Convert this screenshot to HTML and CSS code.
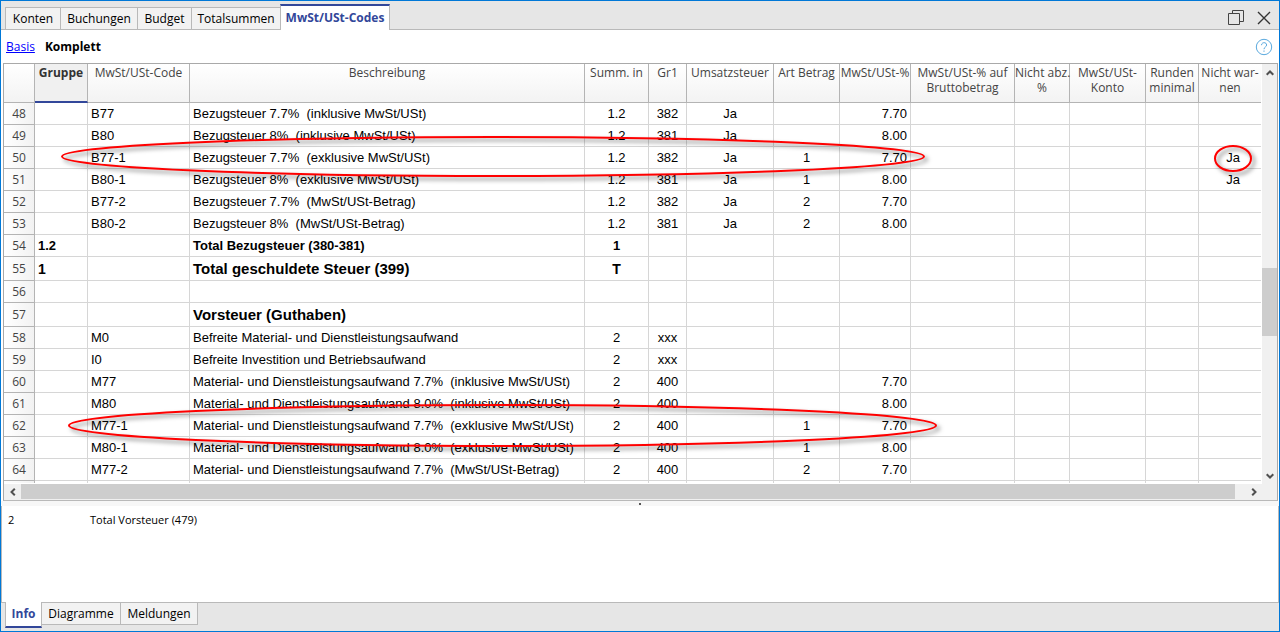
FILE: index.html
```html
<!DOCTYPE html>
<html lang="de">
<head>
<meta charset="utf-8">
<title>MwSt/USt-Codes</title>
<link rel="stylesheet" href="styles.css">
</head>
<body>
<div class="window">
  <header class="topbar">
    <nav class="tabs">
      <button class="tab tab-s">Konten</button>
      <button class="tab tab-m">Buchungen</button>
      <button class="tab tab-xs">Budget</button>
      <button class="tab tab-l">Totalsummen</button>
      <button class="tab tab-active">MwSt/USt-Codes</button>
    </nav>
    <div class="controls">
      <button class="icon" aria-label="Fenster"><svg width="16" height="16" viewBox="0 0 16 16" fill="none" stroke="#444"><path d="M.5 3.500h11v11H.5zM4.500 3.500v-3h11v11h-4"/></svg></button>
      <button class="icon" aria-label="Schliessen"><svg width="16" height="16" viewBox="0 0 16 16" fill="none" stroke="#333" stroke-width="1.400"><path d="M2 2l12 12M14 2L2 14"/></svg></button>
    </div>
  </header>
  <div class="views">
    <a href="#">Basis</a>
    <strong>Komplett</strong>
    <button class="icon help" aria-label="Hilfe"><svg width="18" height="18" viewBox="0 0 18 18" fill="none" stroke="#5aa9de"><circle cx="9" cy="9" r="7.700"/><path d="M6.500 7.200C6.500 3.800 11.700 3.900 11.600 7c0 2-2.600 2-2.600 4.200M9 12.500v1.300"/></svg></button>
  </div>
  <main class="sheet">
    <div class="grid">
      <table>
        <colgroup>
          <col class="c-row"><col class="c-gruppe"><col class="c-code"><col><col class="c-summ"><col class="c-gr"><col class="c-ums"><col class="c-art"><col class="c-pct"><col class="c-brutto"><col class="c-abz"><col class="c-konto"><col class="c-runden"><col class="c-warn">
        </colgroup>
        <thead>
          <tr><th></th><th class="selected">Gruppe</th><th>MwSt/USt-Code</th><th>Beschreibung</th><th>Summ. in</th><th>Gr1</th><th>Umsatzsteuer</th><th>Art Betrag</th><th>MwSt/USt-%</th><th>MwSt/USt-% auf<br>Bruttobetrag</th><th>Nicht abz.<br>%</th><th>MwSt/USt-<br>Konto</th><th>Runden<br>minimal</th><th>Nicht war-<br>nen</th></tr>
        </thead>
        <tbody>
          <tr><th>48</th><td></td><td>B77</td><td>Bezugsteuer 7.7%  (inklusive MwSt/USt)</td><td>1.2</td><td>382</td><td>Ja</td><td></td><td>7.70</td><td></td><td></td><td></td><td></td><td></td></tr>
          <tr><th>49</th><td></td><td>B80</td><td>Bezugsteuer 8%  (inklusive MwSt/USt)</td><td>1.2</td><td>381</td><td>Ja</td><td></td><td>8.00</td><td></td><td></td><td></td><td></td><td></td></tr>
          <tr><th>50</th><td></td><td>B77-1</td><td>Bezugsteuer 7.7%  (exklusive MwSt/USt)</td><td>1.2</td><td>382</td><td>Ja</td><td>1</td><td>7.70</td><td></td><td></td><td></td><td></td><td>Ja</td></tr>
          <tr><th>51</th><td></td><td>B80-1</td><td>Bezugsteuer 8%  (exklusive MwSt/USt)</td><td>1.2</td><td>381</td><td>Ja</td><td>1</td><td>8.00</td><td></td><td></td><td></td><td></td><td>Ja</td></tr>
          <tr><th>52</th><td></td><td>B77-2</td><td>Bezugsteuer 7.7%  (MwSt/USt-Betrag)</td><td>1.2</td><td>382</td><td>Ja</td><td>2</td><td>7.70</td><td></td><td></td><td></td><td></td><td></td></tr>
          <tr><th>53</th><td></td><td>B80-2</td><td>Bezugsteuer 8%  (MwSt/USt-Betrag)</td><td>1.2</td><td>381</td><td>Ja</td><td>2</td><td>8.00</td><td></td><td></td><td></td><td></td><td></td></tr>
          <tr class="total"><th>54</th><td>1.2</td><td></td><td>Total Bezugsteuer (380-381)</td><td>1</td><td></td><td></td><td></td><td></td><td></td><td></td><td></td><td></td><td></td></tr>
          <tr class="title"><th>55</th><td>1</td><td></td><td>Total geschuldete Steuer (399)</td><td>T</td><td></td><td></td><td></td><td></td><td></td><td></td><td></td><td></td><td></td></tr>
          <tr><th>56</th><td></td><td></td><td></td><td></td><td></td><td></td><td></td><td></td><td></td><td></td><td></td><td></td><td></td></tr>
          <tr class="title"><th>57</th><td></td><td></td><td>Vorsteuer (Guthaben)</td><td></td><td></td><td></td><td></td><td></td><td></td><td></td><td></td><td></td><td></td></tr>
          <tr><th>58</th><td></td><td>M0</td><td>Befreite Material- und Dienstleistungsaufwand</td><td>2</td><td>xxx</td><td></td><td></td><td></td><td></td><td></td><td></td><td></td><td></td></tr>
          <tr><th>59</th><td></td><td>I0</td><td>Befreite Investition und Betriebsaufwand</td><td>2</td><td>xxx</td><td></td><td></td><td></td><td></td><td></td><td></td><td></td><td></td></tr>
          <tr><th>60</th><td></td><td>M77</td><td>Material- und Dienstleistungsaufwand 7.7%  (inklusive MwSt/USt)</td><td>2</td><td>400</td><td></td><td></td><td>7.70</td><td></td><td></td><td></td><td></td><td></td></tr>
          <tr><th>61</th><td></td><td>M80</td><td>Material- und Dienstleistungsaufwand 8.0%  (inklusive MwSt/USt)</td><td>2</td><td>400</td><td></td><td></td><td>8.00</td><td></td><td></td><td></td><td></td><td></td></tr>
          <tr><th>62</th><td></td><td>M77-1</td><td>Material- und Dienstleistungsaufwand 7.7%  (exklusive MwSt/USt)</td><td>2</td><td>400</td><td></td><td>1</td><td>7.70</td><td></td><td></td><td></td><td></td><td></td></tr>
          <tr><th>63</th><td></td><td>M80-1</td><td>Material- und Dienstleistungsaufwand 8.0%  (exklusive MwSt/USt)</td><td>2</td><td>400</td><td></td><td>1</td><td>8.00</td><td></td><td></td><td></td><td></td><td></td></tr>
          <tr><th>64</th><td></td><td>M77-2</td><td>Material- und Dienstleistungsaufwand 7.7%  (MwSt/USt-Betrag)</td><td>2</td><td>400</td><td></td><td>2</td><td>7.70</td><td></td><td></td><td></td><td></td><td></td></tr>
          <tr class="cut"><th></th><td></td><td></td><td></td><td></td><td></td><td></td><td></td><td></td><td></td><td></td><td></td><td></td><td></td></tr>
        </tbody>
      </table>
      <svg class="mark mark-b"><ellipse cx="50%" cy="50%" rx="50%" ry="50%"/></svg>
      <svg class="mark mark-m"><ellipse cx="50%" cy="50%" rx="50%" ry="50%"/></svg>
      <svg class="mark mark-ja"><ellipse cx="50%" cy="50%" rx="50%" ry="50%"/></svg>
    </div>
    <div class="vscroll">
      <button class="arrow" aria-label="Nach oben"><svg width="8" height="6" viewBox="0 0 8 6"><path d="M.7 4.800L4 1.500l3.300 3.300"/></svg></button>
      <div class="track-v"><div class="thumb-v"></div></div>
      <button class="arrow" aria-label="Nach unten"><svg width="8" height="6" viewBox="0 0 8 6"><path d="M.7 1.200L4 4.500l3.300-3.300"/></svg></button>
    </div>
    <div class="hscroll">
      <button class="arrow" aria-label="Nach links"><svg width="6" height="8" viewBox="0 0 6 8"><path d="M4.800.7L1.500 4l3.300 3.300"/></svg></button>
      <div class="track-h"><div class="thumb-h"></div></div>
      <button class="arrow" aria-label="Nach rechts"><svg width="6" height="8" viewBox="0 0 6 8"><path d="M1.200.7L4.500 4 1.200 7.300"/></svg></button>
    </div>
    <div class="corner"></div>
  </main>
  <div class="splitter"><span class="grip"></span></div>
  <section class="info">
    <span class="info-group">2</span>
    <span>Total Vorsteuer (479)</span>
  </section>
  <footer class="bottombar">
    <button class="btab btab-active">Info</button>
    <button class="btab btab-l">Diagramme</button>
    <button class="btab btab-m">Meldungen</button>
  </footer>
</div>
</body>
</html>
```

FILE: styles.css
```css
* {
  box-sizing: border-box;
}

body {
  margin: 0;
  background: #fff;
  color: #000;
  font: 12px/16px "Open Sans", "Noto Sans", sans-serif;
}

button {
  margin: 0;
  padding: 0;
  border: 0;
  background: none;
  color: inherit;
  font: inherit;
}

svg {
  display: block;
}

.window {
  display: flex;
  flex-direction: column;
  min-height: 100vh;
  border: 1px solid #0078d7;
}

.topbar {
  display: flex;
  justify-content: space-between;
  height: 29px;
  padding: 0 7px 0 4px;
  background: linear-gradient(#b9b9b9, #b9b9b9) bottom / 100% 1px no-repeat #e6e6e6;
}

.tabs {
  display: flex;
  align-items: flex-end;
}

.tab {
  height: 23px;
  border: 1px solid #b9b9b9;
  border-right: 0;
  background: #f2f2f2;
  white-space: nowrap;
}

.tab-xs {
  width: 54px;
}

.tab-s {
  width: 55px;
}

.tab-m {
  width: 77px;
}

.tab-l {
  width: 89px;
}

.tab-active {
  width: 110px;
  height: 26px;
  border-top: 2px solid #32479a;
  border-right: 1px solid #b9b9b9;
  border-bottom: 0;
  background: #fff;
  color: #32479a;
  font-weight: 700;
}

.controls {
  display: flex;
  align-items: center;
  gap: 12px;
  padding-top: 4px;
}

.icon {
  display: block;
}

.views {
  display: flex;
  align-items: center;
  gap: 10px;
  height: 33px;
  padding: 0 6px 0 5px;
}

.views a {
  color: #00f;
}

.help {
  margin-left: auto;
}

.sheet {
  display: grid;
  grid-template-columns: 1fr 15px;
  margin: 0 1px 0 2px;
  border: 1px solid #a9a9a9;
  border-bottom-color: #b9b9b9;
}

.grid {
  position: relative;
  min-width: 0;
  padding: 0 1px 1px 0;
  overflow: hidden;
}

table {
  width: 100%;
  table-layout: fixed;
  border-collapse: separate;
  border-spacing: 0;
}

.c-row { width: 31px; }
.c-gruppe, .c-runden { width: 53px; }
.c-code { width: 102px; }
.c-summ { width: 64px; }
.c-gr { width: 38px; }
.c-ums { width: 87px; }
.c-art { width: 66px; }
.c-pct { width: 71px; }
.c-brutto { width: 104px; }
.c-abz { width: 55px; }
.c-konto { width: 76px; }
.c-warn { width: 62px; }

thead th {
  height: 39px;
  padding: 1px 0 0;
  border-right: 1px solid #b4b4b4;
  border-bottom: 1px solid #b4b4b4;
  background: linear-gradient(#fff, #f3f3f3);
  color: #444;
  font-weight: 400;
  line-height: 15px;
  vertical-align: top;
  white-space: nowrap;
}

thead .selected {
  border-bottom: 2px solid #32479a;
  background: #f0f0f0;
  color: #333;
  font-weight: 700;
}

tbody th {
  padding: 0;
  border-right: 1px solid #b4b4b4;
  border-bottom: 1px solid #b4b4b4;
  background: linear-gradient(90deg, #fff, #f2f2f2);
  color: #444;
  font-weight: 400;
}

tbody td {
  height: 22px;
  padding: 0 3px;
  border-right: 1px solid #d6d6d6;
  border-bottom: 1px solid #d6d6d6;
  font: 13px/16px "Liberation Sans", Arial, sans-serif;
  text-align: center;
  white-space: pre;
}

tbody td:nth-child(-n+4) {
  text-align: left;
}

tbody td:nth-child(9) {
  text-align: right;
}

tr > :last-child {
  border-right: 0;
}

td:last-child {
  padding: 0 0 0 6px;
}

.total td {
  font-weight: 700;
}

.title td {
  height: 24px;
  font-size: 15px;
  font-weight: 700;
}

.title td:nth-child(2),
.title td:nth-child(5) {
  font-size: 14px;
}

.cut th,
.cut td {
  height: 2px;
  border-bottom: 0;
}

.mark {
  position: absolute;
  overflow: visible;
  fill: none;
  stroke: #f00;
  stroke-width: 2px;
  filter: drop-shadow(3px 3px 2px rgba(0, 0, 0, 0.5));
  pointer-events: none;
}

.mark-b {
  top: 73px;
  left: 58px;
  width: 862px;
  height: 39px;
}

.mark-m {
  top: 341px;
  left: 65px;
  width: 867px;
  height: 41px;
}

.mark-ja {
  top: 82px;
  right: 11px;
  width: 36px;
  height: 25px;
}

.vscroll {
  display: flex;
  flex-direction: column;
  background: #f0f0f0;
}

.arrow {
  display: flex;
  flex: 0 0 17px;
  align-items: center;
  justify-content: center;
  fill: none;
  stroke: #505050;
  stroke-width: 2px;
}

.track-v {
  flex: 1;
  display: grid;
  grid-template-rows: 187fr 68fr 131fr;
}

.thumb-v {
  grid-row: 2;
  background: #cdcdcd;
}

.hscroll {
  display: flex;
  height: 16px;
  padding-bottom: 1px;
  background: #f0f0f0;
}

.track-h {
  flex: 1;
  padding-right: 10px;
}

.thumb-h {
  height: 100%;
  background: #cdcdcd;
}

.corner {
  background: #f0f0f0;
}

.splitter {
  display: flex;
  justify-content: center;
  height: 5px;
  background: #f7f7f7;
}

.grip {
  width: 2px;
  height: 2px;
  margin-top: 2px;
  background: #555;
}

.info {
  display: flex;
  flex: 1;
  padding: 6px;
  border-right: 1px solid #b9b9b9;
  border-left: 1px solid #b9b9b9;
  font-size: 11px;
}

.info-group {
  flex: 0 0 82px;
}

.bottombar {
  display: flex;
  align-items: flex-start;
  height: 29px;
  padding-left: 4px;
  background: linear-gradient(#b9b9b9, #b9b9b9) top / 100% 1px no-repeat #e6e6e6;
}

.btab {
  height: 23px;
  border: 1px solid #b9b9b9;
  border-left: 0;
  background: #f2f2f2;
}

.btab-l {
  width: 79px;
}

.btab-m {
  width: 77px;
}

.btab-active {
  width: 37px;
  height: 26px;
  border-top: 0;
  border-left: 1px solid #b9b9b9;
  border-bottom: 2px solid #32479a;
  background: #fff;
  color: #32479a;
  font-weight: 700;
}
```
